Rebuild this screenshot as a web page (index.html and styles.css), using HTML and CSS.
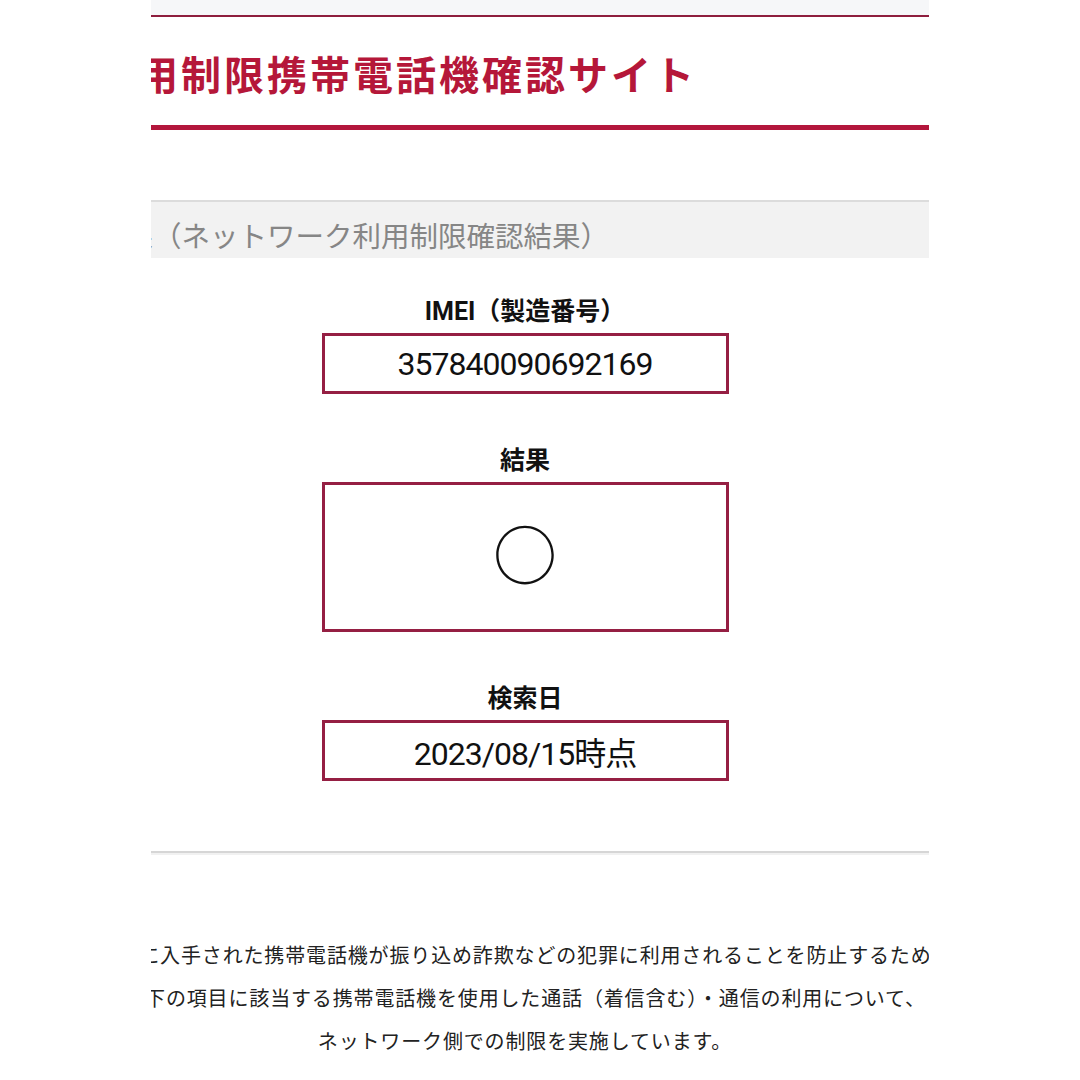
FILE: index.html
```html
<!DOCTYPE html>
<html lang="ja">
<head>
  <meta charset="UTF-8">
  <title>ネットワーク利用制限携帯電話機確認サイト</title>
  <link rel="stylesheet" href="styles.css">
</head>
<body>
  <!-- ズームされた画面の見えている範囲 -->
  <div class="viewport">
    <div class="page">
      <div class="top-band"></div>

      <!-- サイトタイトル -->
      <header class="site-header">
        <h1 class="site-title">ネットワーク利用制限携帯電話機確認サイト</h1>
      </header>

      <h2 class="section-title">確認結果（ネットワーク利用制限確認結果）</h2>

      <!-- 結果の各項目 -->
      <div class="result">
        <div class="item">
          <div class="item-label">IMEI（製造番号）</div>
          <div class="item-box">357840090692169</div>
        </div>
        <div class="item">
          <div class="item-label">結果</div>
          <div class="item-box tall"><span class="mark">○</span></div>
        </div>
        <div class="item">
          <div class="item-label">検索日</div>
          <div class="item-box">2023/08/15時点</div>
        </div>
      </div>

      <hr class="divider">

      <p class="notice">
        <span>不正に入手された携帯電話機が振り込め詐欺などの犯罪に利用されることを防止するため、</span>
        <span>以下の項目に該当する携帯電話機を使用した通話（着信含む）・通信の利用について、</span>
        <span>ネットワーク側での制限を実施しています。</span>
      </p>
    </div>
  </div>
</body>
</html>
```

FILE: styles.css
```css
body {
  margin: 0;
  background-color: #fff;
  font-family: Roboto, "Noto Sans CJK JP", sans-serif;
  color: #111;
}
.viewport {
  margin-left: 151px;
  width: 778px;
  height: 1080px;
  overflow: hidden;
}
.page {
  margin-left: -41px;
  width: 830px;
}
.top-band {
  height: 15px;
  background-color: #f6f7f9;
  border-bottom: 2px solid #8e1e3e;
}
/* タイトル */
.site-header {
  padding: 32px 0 28px;
  border-bottom: 5px solid #b3163c;
}
.site-title {
  margin: 0 0 0 -273px;
  white-space: nowrap;
  font-family: "Noto Sans CJK JP", sans-serif;
  font-size: 40px;
  line-height: 48px;
  letter-spacing: 3px;
  font-weight: 700;
  color: #b51739;
}
.section-title {
  margin: 70px 0 0 -71px;
  padding: 9px 0 0;
  height: 47px;
  border-top: 2px solid #dcdcdc;
  background-color: #f2f2f2;
  white-space: nowrap;
  font-family: "Noto Sans CJK JP", sans-serif;
  font-size: 28.5px;
  line-height: 47px;
  font-weight: 400;
  color: #868686;
}
.result {
  display: flex;
  flex-direction: column;
  align-items: center;
  gap: 52px;
  margin-top: 39px;
}
.item {
  display: flex;
  flex-direction: column;
  align-items: center;
}
.item-label {
  font-size: 25px;
  line-height: 30px;
  font-weight: 700;
  margin-bottom: 6px;
}
.item-box {
  box-sizing: border-box;
  width: 407px;
  height: 61px;
  border: 3px solid #951f43;
  display: flex;
  align-items: center;
  justify-content: center;
  font-size: 32px;
  letter-spacing: -1px;
}
.item-box.tall {
  height: 150px;
}
.mark {
  margin-top: -12px;
  font-family: "Noto Sans CJK JP", sans-serif;
  font-size: 64px;
  line-height: 1;
  letter-spacing: 0;
}
.divider {
  margin: 70px 0 0;
  border: 0;
  border-top: 2px solid #d6d6d6;
  border-bottom: 2px solid #f1f1f1;
}
.notice {
  margin: 78px 0 0;
  text-align: center;
  font-family: "Noto Sans CJK JP", sans-serif;
  font-size: 20px;
  line-height: 43px;
  letter-spacing: 0.85px;
  color: #222;
}
.notice span {
  display: block;
  white-space: nowrap;
  margin: 0 -200px;
}
```
